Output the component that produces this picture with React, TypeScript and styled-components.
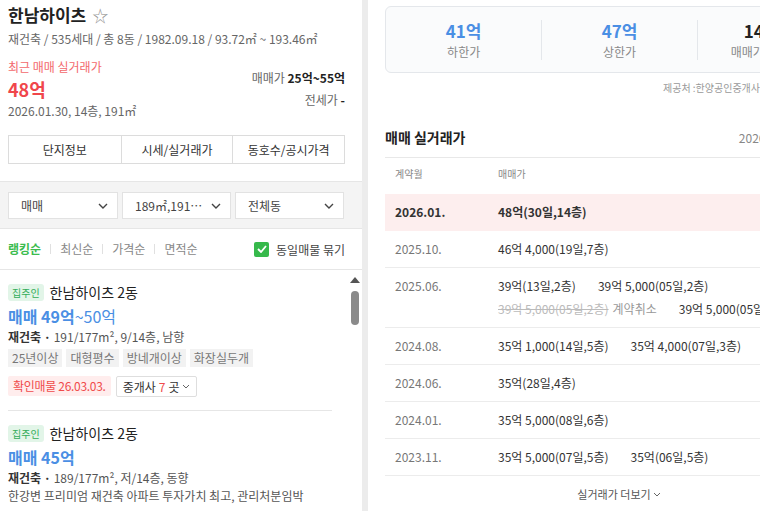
import React from 'react';
import styled, { createGlobalStyle } from 'styled-components';

const GlobalStyle = createGlobalStyle`
  html, body {
    margin: 0;
    padding: 0;
    overflow: hidden;
    background: #ececec;
  }
  body {
    font-family: "Noto Sans CJK KR", "Noto Sans", sans-serif;
    color: #333;
  }
  * {
    box-sizing: border-box;
  }
`;

interface Listing {
  title: string;
  price: string;
  priceRange?: string;
  spec: string;
  tags?: string[];
  confirmed?: string;
  agents?: number;
  memo?: string;
}

interface Deal {
  text: string;
  canceled?: boolean;
}

interface DealRow {
  month: string;
  lines: Deal[][];
  highlight?: boolean;
}

const listings: Listing[] = [
  {
    title: '한남하이츠 2동',
    price: '매매 49억',
    priceRange: '~50억',
    spec: '191/177m², 9/14층, 남향',
    tags: ['25년이상', '대형평수', '방네개이상', '화장실두개'],
    confirmed: '확인매물 26.03.03.',
    agents: 7,
  },
  {
    title: '한남하이츠 2동',
    price: '매매 45억',
    spec: '189/177m², 저/14층, 동향',
    memo: '한강변 프리미엄 재건축 아파트 투자가치 최고, 관리처분임박',
  },
];

const deals: DealRow[] = [
  { month: '2026.01.', lines: [[{ text: '48억(30일,14층)' }]], highlight: true },
  { month: '2025.10.', lines: [[{ text: '46억 4,000(19일,7층)' }]] },
  {
    month: '2025.06.',
    lines: [
      [{ text: '39억(13일,2층)' }, { text: '39억 5,000(05일,2층)' }],
      [{ text: '39억 5,000(05일,2층)', canceled: true }, { text: '39억 5,000(05일,2층)' }],
    ],
  },
  { month: '2024.08.', lines: [[{ text: '35억 1,000(14일,5층)' }, { text: '35억 4,000(07일,3층)' }]] },
  { month: '2024.06.', lines: [[{ text: '35억(28일,4층)' }]] },
  { month: '2024.01.', lines: [[{ text: '35억 5,000(08일,6층)' }]] },
  { month: '2023.11.', lines: [[{ text: '35억 5,000(07일,5층)' }, { text: '35억(06일,5층)' }]] },
];

const Chevron = () => (
  <svg width="10" height="6" viewBox="0 0 10 6" fill="none">
    <path d="M1 1l4 4 4-4" stroke="#444" strokeWidth="1.4" />
  </svg>
);

const SmallChevron = () => (
  <svg width="8" height="5" viewBox="0 0 8 5" fill="none">
    <path d="M1 1l3 3 3-3" stroke="#666" strokeWidth="1" />
  </svg>
);

export default function App() {
  return (
    <>
      <GlobalStyle />
      <SPage>
        <SLeft>
          <SHeader>
            <STitleRow>
              <STitle>한남하이츠</STitle>
              <SStar>☆</SStar>
            </STitleRow>
            <SSub>재건축 / 535세대 / 총 8동 / 1982.09.18 / 93.72㎡ ~ 193.46㎡</SSub>
            <SPriceRow>
              <div>
                <SRecentLabel>최근 매매 실거래가</SRecentLabel>
                <SRecentPrice>48억</SRecentPrice>
                <SRecentMeta>2026.01.30, 14층, 191㎡</SRecentMeta>
              </div>
              <SRangeBox>
                <SRange>
                  매매가 <b>25억~55억</b>
                </SRange>
                <SRange>
                  전세가 <b>-</b>
                </SRange>
              </SRangeBox>
            </SPriceRow>
            <STabs>
              <STab>단지정보</STab>
              <STab>시세/실거래가</STab>
              <STab>동호수/공시가격</STab>
            </STabs>
          </SHeader>

          <SFilters>
            <SSelect>
              <span>매매</span>
              <Chevron />
            </SSelect>
            <SSelect>
              <span>189㎡,191…</span>
              <Chevron />
            </SSelect>
            <SSelect>
              <span>전체동</span>
              <Chevron />
            </SSelect>
          </SFilters>

          <SSortBar>
            <SSortList>
              <SSort $active>랭킹순</SSort>
              <SSep />
              <SSort>최신순</SSort>
              <SSep />
              <SSort>가격순</SSort>
              <SSep />
              <SSort>면적순</SSort>
            </SSortList>
            <SCheckLabel>
              <SCheckBox>
                <svg width="10" height="8" viewBox="0 0 10 8" fill="none">
                  <path d="M1 4l3 3 5-6" stroke="#fff" strokeWidth="1.8" />
                </svg>
              </SCheckBox>
              동일매물 묶기
            </SCheckLabel>
          </SSortBar>

          <SListArea>
            <SList>
              {listings.map((item, i) => (
                <SItem key={i}>
                  <SItemHead>
                    <SBadge>집주인</SBadge>
                    <SItemTitle>{item.title}</SItemTitle>
                  </SItemHead>
                  <SItemPrice>
                    {item.price}
                    {item.priceRange && <span>{item.priceRange}</span>}
                  </SItemPrice>
                  <SSpec>
                    <b>재건축 · </b>
                    {item.spec}
                  </SSpec>
                  {item.memo && <SSpec>{item.memo}</SSpec>}
                  {item.tags && (
                    <STags>
                      {item.tags.map((t) => (
                        <STag key={t}>{t}</STag>
                      ))}
                    </STags>
                  )}
                  {item.confirmed && (
                    <SItemFoot>
                      <SConfirmed>{item.confirmed}</SConfirmed>
                      <SAgents>
                        중개사 <em>{item.agents}</em>곳 <SmallChevron />
                      </SAgents>
                    </SItemFoot>
                  )}
                </SItem>
              ))}
            </SList>
            <SScrollbar>
              <SScrollArrow />
              <SScrollThumb />
            </SScrollbar>
          </SListArea>
        </SLeft>

        <SRight>
          <SSummary>
            <SSummaryCol>
              <SSummaryValue>41억</SSummaryValue>
              <SSummaryLabel>하한가</SSummaryLabel>
            </SSummaryCol>
            <SSummaryCol>
              <SSummaryValue>47억</SSummaryValue>
              <SSummaryLabel>상한가</SSummaryLabel>
            </SSummaryCol>
            <SSummaryCol>
              <SSummaryValue $dark>14.65%</SSummaryValue>
              <SSummaryLabel>매매가 상승률(%)</SSummaryLabel>
            </SSummaryCol>
          </SSummary>
          <SProvider>제공처 :한양공인중개사사무소</SProvider>

          <SSectionHead>
            <SSectionTitle>매매 실거래가</SSectionTitle>
            <SSectionDate>2026.01.30. 업데이트</SSectionDate>
          </SSectionHead>

          <STable>
            <SHeadRow>
              <SMonthCell>계약월</SMonthCell>
              <div>매매가</div>
            </SHeadRow>
            {deals.map((row) => (
              <SDealRow key={row.month} $highlight={row.highlight}>
                <SMonthCell>{row.month}</SMonthCell>
                <SDealLines>
                  {row.lines.map((line, li) => (
                    <SDealLine key={li}>
                      {line.map((d, di) => (
                        <SDeal key={di} $canceled={d.canceled}>
                          {d.text}
                          {d.canceled && <SCancelNote>계약취소</SCancelNote>}
                        </SDeal>
                      ))}
                    </SDealLine>
                  ))}
                </SDealLines>
              </SDealRow>
            ))}
          </STable>
          <SMore>
            실거래가 더보기
            <SmallChevron />
          </SMore>
        </SRight>
      </SPage>
    </>
  );
}

const SPage = styled.div`
  display: flex;
  gap: 6px;
  width: 900px;
  height: 511px;
`;

const SLeft = styled.section`
  width: 362px;
  flex-shrink: 0;
  height: 100%;
  background: #fff;
  display: flex;
  flex-direction: column;
`;

const SHeader = styled.div`
  padding: 4px 17px 17px 8px;
  border-bottom: 1px solid #e6e6e6;
`;

const STitleRow = styled.div`
  display: flex;
  align-items: center;
  gap: 6px;
  height: 22px;
`;

const STitle = styled.h1`
  margin: 0;
  font-size: 17px;
  line-height: 22px;
  font-weight: 700;
  color: #222;
`;

const SStar = styled.span`
  font-size: 16px;
  line-height: 22px;
  color: #999;
`;

const SSub = styled.div`
  margin-top: 5px;
  font-size: 12px;
  line-height: 16px;
  color: #666;
  white-space: nowrap;
`;

const SPriceRow = styled.div`
  margin-top: 12px;
  display: flex;
  justify-content: space-between;
`;

const SRecentLabel = styled.div`
  font-size: 12px;
  line-height: 16px;
  color: #f3686c;
`;

const SRecentPrice = styled.div`
  margin-top: 2px;
  font-size: 18px;
  line-height: 24px;
  font-weight: 700;
  color: #f0464b;
`;

const SRecentMeta = styled.div`
  margin-top: 2px;
  font-size: 12px;
  line-height: 16px;
  color: #666;
`;

const SRangeBox = styled.div`
  padding-top: 11px;
  display: flex;
  flex-direction: column;
  align-items: flex-end;
  gap: 6px;
`;

const SRange = styled.div`
  font-size: 12px;
  line-height: 16px;
  color: #666;

  & > b {
    color: #222;
    font-weight: 700;
  }
`;

const STabs = styled.div`
  margin-top: 16px;
  display: grid;
  grid-template-columns: repeat(3, 1fr);
  border: 1px solid #dcdcdc;
`;

const STab = styled.div`
  height: 27px;
  display: flex;
  align-items: center;
  justify-content: center;
  font-size: 12px;
  color: #333;

  & + & {
    border-left: 1px solid #dcdcdc;
  }
`;

const SFilters = styled.div`
  display: grid;
  grid-template-columns: 110px 109px 109px;
  gap: 4px;
  padding: 10px 17px 9px 8px;
  background: #f4f4f4;
  border-bottom: 1px solid #e6e6e6;
`;

const SSelect = styled.div`
  height: 27px;
  background: #fff;
  border: 1px solid #e2e2e2;
  display: flex;
  align-items: center;
  justify-content: space-between;
  padding: 0 9px 0 12px;
  font-size: 12px;
  color: #444;
  white-space: nowrap;
`;

const SSortBar = styled.div`
  height: 41px;
  padding: 0 17px 0 8px;
  display: flex;
  align-items: center;
  justify-content: space-between;
  border-bottom: 1px solid #e6e6e6;
`;

const SSortList = styled.div`
  display: flex;
  align-items: center;
  gap: 9px;
`;

const SSort = styled.span<{ $active?: boolean }>`
  font-size: 12px;
  line-height: 16px;
  color: ${({ $active }) => ($active ? '#3cbc4f' : '#888')};
  font-weight: ${({ $active }) => ($active ? 700 : 400)};
`;

const SSep = styled.span`
  width: 1px;
  height: 10px;
  background: #e0e0e0;
`;

const SCheckLabel = styled.label`
  display: flex;
  align-items: center;
  gap: 7px;
  font-size: 12px;
  color: #444;
`;

const SCheckBox = styled.span`
  width: 15px;
  height: 15px;
  background: #36b94b;
  border-radius: 2px;
  display: flex;
  align-items: center;
  justify-content: center;
`;

const SListArea = styled.div`
  flex: 1;
  display: flex;
  overflow: hidden;
`;

const SList = styled.div`
  flex: 1;
  padding: 0 15px 0 8px;
`;

const SItem = styled.article`
  padding: 13px 0 13px;

  & + & {
    border-top: 1px solid #e6e6e6;
  }
`;

const SItemHead = styled.div`
  display: flex;
  align-items: center;
  gap: 6px;
`;

const SBadge = styled.span`
  padding: 0 4px;
  height: 17px;
  line-height: 17px;
  font-size: 10px;
  color: #32ac59;
  background: #e2f5e8;
  border-radius: 3px;
`;

const SItemTitle = styled.span`
  font-size: 14px;
  line-height: 18px;
  color: #222;
`;

const SItemPrice = styled.div`
  margin-top: 4px;
  font-size: 16px;
  line-height: 22px;
  font-weight: 700;
  color: #4a8fe4;

  & > span {
    font-weight: 400;
  }
`;

const SSpec = styled.div`
  margin-top: 1px;
  font-size: 12px;
  line-height: 17px;
  color: #555;
  white-space: nowrap;

  & > b {
    color: #333;
    font-weight: 700;
  }
`;

const STags = styled.div`
  margin-top: 4px;
  display: flex;
  gap: 4px;
`;

const STag = styled.span`
  padding: 0 4px;
  height: 18px;
  line-height: 18px;
  font-size: 12px;
  color: #777;
  background: #f2f2f2;
`;

const SItemFoot = styled.div`
  margin-top: 9px;
  display: flex;
  gap: 5px;
`;

const SConfirmed = styled.span`
  padding: 0 5px;
  height: 20px;
  line-height: 20px;
  font-size: 12px;
  color: #f04b4b;
  background: #ffeded;
  border-radius: 2px;
  letter-spacing: -0.3px;
`;

const SAgents = styled.span`
  display: flex;
  align-items: center;
  gap: 3px;
  padding: 0 6px;
  height: 21px;
  font-size: 12px;
  color: #333;
  border: 1px solid #dedede;
  border-radius: 2px;

  & > em {
    font-style: normal;
    color: #f04b4b;
  }
`;

const SScrollbar = styled.div`
  width: 15px;
  display: flex;
  flex-direction: column;
  align-items: center;
  padding-top: 7px;
  gap: 8px;
`;

const SScrollArrow = styled.span`
  width: 0;
  height: 0;
  border-left: 5px solid transparent;
  border-right: 5px solid transparent;
  border-bottom: 6px solid #555;
`;

const SScrollThumb = styled.span`
  width: 8px;
  height: 34px;
  border-radius: 4px;
  background: #8a8a8a;
`;

const SRight = styled.section`
  width: 502px;
  flex-shrink: 0;
  height: 100%;
  background: #fff;
  padding: 6px 17px 0;
`;

const SSummary = styled.div`
  display: grid;
  grid-template-columns: repeat(3, 1fr);
  height: 67px;
  border: 1px solid #e4e7eb;
  border-radius: 6px;
  background: #fafbfc;
  align-items: center;
`;

const SSummaryCol = styled.div`
  display: flex;
  flex-direction: column;
  align-items: center;
  gap: 1px;

  & + & {
    border-left: 1px solid #e4e7eb;
  }
`;

const SSummaryValue = styled.div<{ $dark?: boolean }>`
  font-size: 17px;
  line-height: 22px;
  font-weight: 700;
  color: ${({ $dark }) => ($dark ? '#222' : '#4a8fe4')};
`;

const SSummaryLabel = styled.div`
  font-size: 12px;
  line-height: 17px;
  color: #888;
  white-space: nowrap;
`;

const SProvider = styled.div`
  margin-top: 8px;
  padding-left: 278px;
  font-size: 10px;
  line-height: 14px;
  color: #999;
  white-space: nowrap;
`;

const SSectionHead = styled.div`
  margin-top: 26px;
  height: 37px;
  display: flex;
  align-items: center;
  justify-content: space-between;
  border-bottom: 1px solid #e8e8e8;
  padding-bottom: 4px;
`;

const SSectionTitle = styled.h2`
  margin: 0;
  font-size: 14px;
  line-height: 20px;
  font-weight: 700;
  color: #222;
`;

const SSectionDate = styled.span`
  padding-right: 4px;
  font-size: 12px;
  color: #888;
  white-space: nowrap;
`;

const STable = styled.div`
  display: flex;
  flex-direction: column;
`;

const SHeadRow = styled.div`
  display: flex;
  align-items: center;
  height: 36px;
  padding-bottom: 5px;
  font-size: 10px;
  color: #888;
`;

const SMonthCell = styled.div`
  width: 113px;
  flex-shrink: 0;
  padding-left: 10px;
`;

const SDealRow = styled.div<{ $highlight?: boolean }>`
  display: flex;
  align-items: flex-start;
  padding: 9px 0 9px;
  font-size: 12px;
  line-height: 18px;
  background: ${({ $highlight }) => ($highlight ? '#fdeeee' : 'transparent')};
  border-bottom: 1px solid ${({ $highlight }) => ($highlight ? '#fdeeee' : '#ececec')};
  color: ${({ $highlight }) => ($highlight ? '#333' : '#777')};
  font-weight: ${({ $highlight }) => ($highlight ? 700 : 400)};

  & > div:last-child {
    color: #333;
  }
`;

const SDealLines = styled.div`
  display: flex;
  flex-direction: column;
  gap: 5px;
`;

const SDealLine = styled.div`
  display: flex;
  gap: 22px;
  white-space: nowrap;
`;

const SDeal = styled.span<{ $canceled?: boolean }>`
  color: ${({ $canceled }) => ($canceled ? '#bbb' : 'inherit')};
  text-decoration: ${({ $canceled }) => ($canceled ? 'line-through' : 'none')};
`;

const SCancelNote = styled.span`
  margin-left: 4px;
  color: #999;
  display: inline-block;
  text-decoration: none;
`;

const SMore = styled.div`
  height: 36px;
  display: flex;
  align-items: center;
  justify-content: center;
  gap: 2px;
  font-size: 11px;
  color: #555;
`;
